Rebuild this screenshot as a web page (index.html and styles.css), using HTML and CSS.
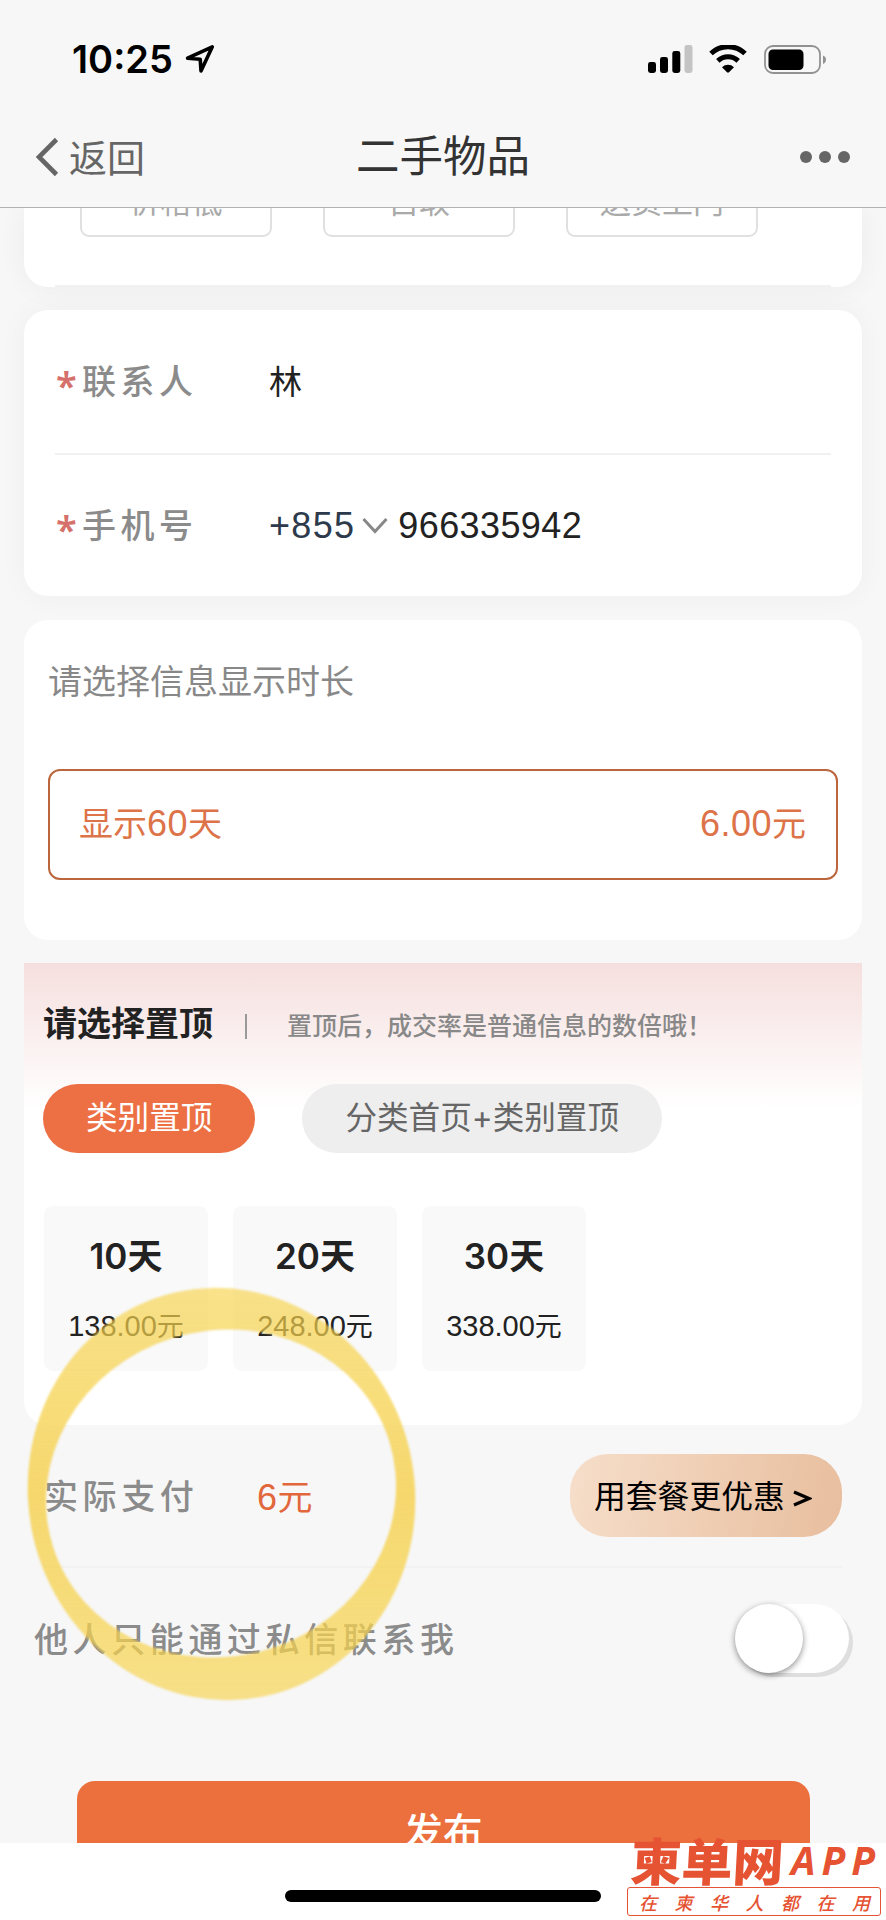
FILE: index.html
```html
<!DOCTYPE html>
<html lang="zh-CN">
<head>
<meta charset="utf-8">
<title>二手物品</title>
<link rel="stylesheet" href="styles.css">
</head>
<body>
<div class="phone">
  <header class="header">
    <div class="status">
      <div class="status-left">
        <span class="time">10:25</span>
        <svg class="loc" viewBox="0 0 30 30" width="30" height="30"><path d="M27.3 2.8 2.6 14.2l12.6 1 .8 11.8z" fill="none" stroke="#000" stroke-width="3.6" stroke-linejoin="round"/></svg>
      </div>
      <div class="status-right">
        <svg width="45" height="28" viewBox="0 0 45 28"><rect x="0" y="17" width="8" height="11" rx="2.4"/><rect x="12" y="12" width="8" height="16" rx="2.4"/><rect x="24.300" y="6" width="8" height="22" rx="2.400"/><rect x="36.500" y="0" width="8" height="28" rx="2.400" fill="#c4c4c4"/></svg>
        <svg class="wifi" width="38" height="28" viewBox="0 0 38 28"><path d="M2 8.500A24.500 24.500 0 0 1 36 8.500" fill="none" stroke="#000" stroke-width="5"/><path d="M8.800 15.800A15 15 0 0 1 29.200 15.800" fill="none" stroke="#000" stroke-width="5"/><path d="M13 22.200a8.700 8.700 0 0 1 12 0L20 27.300q-1 .9-2 0z"/></svg>
        <svg class="battery" width="62" height="29" viewBox="0 0 62 29"><rect x="1" y="1" width="55" height="27" rx="8" fill="none" stroke="#929292" stroke-width="1.800"/><rect x="4.500" y="4.500" width="35" height="20.500" rx="4.500"/><path d="M59 10.500q3 1 3 4t-3 4.500z" fill="#929292"/></svg>
      </div>
    </div>
    <nav class="nav">
      <div class="back"><svg width="23" height="40" viewBox="0 0 23 40"><path d="M20.500 2.500 3 20l17.500 17.500" fill="none" stroke="#666" stroke-width="4.600"/></svg><span>返回</span></div>
      <h1 class="title">二手物品</h1>
      <div class="more"><i></i><i></i><i></i></div>
    </nav>
  </header>

  <main class="content">
    <section class="card tags-card">
      <div class="tags"><span>价格低</span><span>自取</span><span>送货上门</span></div>
      <i class="rule"></i>
    </section>

    <section class="card contact">
      <div class="field"><b class="star">*</b><label>联系人</label><span class="value">林</span></div>
      <div class="field"><b class="star">*</b><label>手机号</label><span class="num code">+855</span><svg class="chev" width="26" height="18" viewBox="0 0 26 18"><path d="M1.500 2 13 14.500 24.500 2" fill="none" stroke="#888" stroke-width="3"/></svg><span class="num phone-no">966335942</span></div>
    </section>

    <section class="card duration">
      <h2>请选择信息显示时长</h2>
      <div class="option"><span>显示<em class="num">60</em>天</span><span><em class="num">6.00</em>元</span></div>
    </section>

    <section class="card top-card">
      <div class="top-head"><h2>请选择置顶</h2><i class="bar"></i><p>置顶后，成交率是普通信息的数倍哦！</p></div>
      <div class="pills"><span class="pill on">类别置顶</span><span class="pill">分类首页+类别置顶</span></div>
      <div class="days">
        <div class="day"><strong>10天</strong><span><em class="num">138.00</em>元</span></div>
        <div class="day"><strong>20天</strong><span><em class="num">248.00</em>元</span></div>
        <div class="day"><strong>30天</strong><span><em class="num">338.00</em>元</span></div>
      </div>
    </section>

    <div class="pay"><span class="pay-label">实际支付</span><span class="pay-sum"><em class="num">6</em>元</span><a class="package"><span>用套餐更优惠</span><svg width="19" height="17" viewBox="0 0 19 17"><path d="M1 2 16 8.500 1 15" fill="none" stroke="#000" stroke-width="3.300"/></svg></a></div>
    <div class="private"><span>他人只能通过私信联系我</span><div class="switch"><i></i></div></div>
    <button class="publish">发布</button>
  </main>

  <footer class="footer"><div class="home"></div></footer>

  <svg class="ring" width="420" height="440" viewBox="10 1274 420 440">
    <defs>
      <linearGradient id="ink" x1="0" y1="1288" x2="0" y2="1700" gradientUnits="userSpaceOnUse">
        <stop offset="0" stop-color="#f7d34c" stop-opacity=".65"/>
        <stop offset=".5" stop-color="#f5d256" stop-opacity=".86"/>
        <stop offset="1" stop-color="#f7d34c" stop-opacity=".65"/>
      </linearGradient>
      <mask id="hole" maskUnits="userSpaceOnUse" x="10" y="1274" width="420" height="440">
        <rect x="10" y="1274" width="420" height="440" fill="#fff"/>
        <ellipse cx="221" cy="1493.500" rx="176.200" ry="162.800" transform="rotate(-17.500 221 1493.500)" fill="#000"/>
      </mask>
      <clipPath id="outer"><ellipse cx="221.500" cy="1494" rx="206.800" ry="193.100" transform="rotate(77 221.500 1494)"/></clipPath>
    </defs>
    <g class="ring-ink"><g mask="url(#hole)"><path d="M10 1274h420v440H10z" fill="url(#ink)" clip-path="url(#outer)"/></g></g>
  </svg>

  <div class="brand">
    <div class="brand-row"><span class="brand-cn">柬单网</span><span class="brand-app">APP</span></div>
    <div class="slogan">在柬华人都在用</div>
  </div>
</div>
</body>
</html>
```
FILE: styles.css
```css
* { box-sizing: border-box; }
body { margin: 0; }
h1, h2, p { margin: 0; font-weight: 400; }
i { display: block; }
em { font-style: normal; }
svg { display: block; flex: none; }

.phone {
  position: relative;
  display: flex;
  flex-direction: column;
  width: 886px;
  height: 1920px;
  overflow: hidden;
  background: #f7f7f7;
  font-family: Inter, "Noto Sans CJK SC", sans-serif;
  color: #222;
  white-space: nowrap;
}
.num { font-family: "Liberation Sans", sans-serif; font-size: 36px; line-height: 1; letter-spacing: .5px; }

/* header */
.header { flex: none; height: 208px; border-bottom: 1px solid #b0b3b2; }
.status { display: flex; justify-content: space-between; height: 118px; padding: 0 60px 0 72px; align-items: center; }
.status-left, .status-right { display: flex; align-items: center; }
.time { font-size: 38px; font-weight: 600; line-height: 44px; color: #000; }
.loc { margin-left: 12px; }
.wifi { margin-left: 16px; }
.battery { margin-left: 17px; }
.nav { display: grid; grid-template-columns: 1fr auto 1fr; align-items: center; height: 78px; padding: 0 36px; }
.back { display: flex; align-items: center; gap: 10px; font-size: 38px; line-height: 50px; color: #666; }
.back span { padding-top: 2px; }
.title { font-size: 43.500px; line-height: 60px; padding-bottom: 2px; color: #333; }
.more { display: flex; gap: 7px; justify-content: flex-end; }
.more i { width: 12px; height: 12px; border-radius: 50%; background: #666; }

/* scrolling content */
.content { flex: none; height: 1635px; overflow: hidden; padding: 0 24px; }
.card { background: #fff; border-radius: 24px; margin-bottom: 23px; }
.tags-card { display: flex; flex-direction: column; justify-content: space-between; height: 79px; border-radius: 0 0 24px 24px; box-shadow: 0 0 30px rgba(60, 30, 40, .05); }
.tags { display: flex; gap: 51px; height: 29px; padding-left: 56px; align-items: flex-end; }
.tags span { width: 192px; height: 78px; flex: none; border: 2px solid #e0e0e0; border-radius: 9px; text-align: center; font-size: 31px; line-height: 82px; color: #aaa; }
.rule { height: 2px; margin: 0 31px; background: #f2f1f1; }

.contact { height: 286px; padding: 0 31px; box-shadow: 0 0 30px rgba(0, 0, 0, .04); margin-bottom: 24px; }
.field { display: flex; align-items: center; height: 143px; }
.field + .field { border-top: 2px solid #f1f1f1; }
.star { width: 27px; padding-left: 1px; font-family: "Noto Sans", sans-serif; font-size: 38px; font-weight: 600; line-height: 50px; height: 44px; color: #d6706a; }
.field label { width: 187px; font-size: 34px; font-weight: 500; line-height: 50px; letter-spacing: 4.500px; color: #8b8b8b; }
.value { font-size: 33px; line-height: 50px; }
.code { letter-spacing: 1.300px; color: #2c3a4c; }
.chev { margin: 0 10px 0 7px; }
.phone-no { letter-spacing: .4px; }

.duration { height: 320px; padding: 34px 24px 0 24px; }
.duration h2 { font-size: 34px; line-height: 56px; color: #888; }
.option { display: flex; justify-content: space-between; align-items: center; height: 111px; margin-top: 59px; padding: 0 30px 6px 29px; border: 2px solid #bc663d; border-radius: 12px; font-size: 34px; color: #dd7349; }

.top-card { height: 462px; margin-bottom: 0; padding: 32px 20px 0 19px; border-radius: 0 0 24px 24px; background: linear-gradient(#f5dfde, #fff 145px); }
.top-head { display: flex; align-items: center; height: 56px; }
.top-head h2 { font-size: 34px; font-weight: 600; line-height: 50px; padding-top: 1px; }
.bar { width: 2px; height: 25px; margin: 6px 40px 0 32px; background: #999; }
.top-head p { font-size: 25px; font-weight: 500; line-height: 40px; padding-top: 6px; color: #888; }
.pills { display: flex; gap: 47px; margin-top: 33px; }
.pill { height: 69px; padding: 0 43px; border-radius: 35px; background: #eee; color: #666; font-size: 31.600px; line-height: 68px; }
.pill.on { background: #ec7044; color: #fff; }
.days { display: flex; gap: 25px; margin: 53px 0 0 1px; }
.day { display: flex; flex-direction: column; align-items: center; width: 164px; height: 165px; padding-top: 25px; border-radius: 9px; background: #f9f9f9; }
.day strong { font-size: 35px; font-weight: 600; line-height: 50px; }
.day span { margin-top: 26px; font-size: 27px; line-height: 40px; }
.day .num { font-size: 29px; letter-spacing: 0; }

.pay { display: flex; align-items: center; height: 143px; margin: 0 20px; padding-left: 0; border-bottom: 2px solid #f2f2f2; font-size: 34px; }
.pay-label { width: 213px; font-weight: 500; letter-spacing: 4.600px; color: #8b8b8b; padding-bottom: 2px; }
.pay-sum { color: #e2673c; font-size: 35px; padding-bottom: 2px; }
.package { display: flex; align-items: center; gap: 8px; width: 272px; height: 83px; margin-left: auto; padding-left: 24px; border-radius: 38px; background: linear-gradient(100deg, #f6deca, #e8be9e); color: #000; font-size: 31.800px; }
.package span { padding-bottom: 3px; }
.package svg { margin-top: 5px; }
.private { display: flex; align-items: center; justify-content: space-between; height: 140px; padding: 0 13px 0 10px; font-size: 34px; font-weight: 500; letter-spacing: 4.600px; color: #8b8b8b; }
.private span { padding-bottom: 2px; }
.switch { width: 114px; height: 69px; border-radius: 35px; background: #fff; box-shadow: 4px 4px 0 #dedede; }
.switch i { width: 68px; height: 69px; border-radius: 50%; background: #fff; box-shadow: 0 2px 6px rgba(0, 0, 0, .45); }
.publish { display: block; width: 733px; height: 110px; margin: 73px auto 0; padding: 0 0 12px; border: 0; border-radius: 18px; background: #ec703d; color: #fff; font: 500 39.500px/92px "Noto Sans CJK SC", sans-serif; }

.footer { flex: none; display: flex; justify-content: center; height: 77px; padding-top: 47px; background: #fff; }
.home { width: 316px; height: 12px; border-radius: 6px; background: #000; }

/* hand-drawn highlight over the page */
.ring { position: absolute; left: 10px; top: 1274px; }
.ring-ink { filter: blur(1px); }

/* corner brand mark */
.brand { position: absolute; left: 627px; top: 1831px; width: 254px; color: #e55333; }
.brand-row { display: flex; align-items: center; height: 56px; }
.brand-cn { width: 165px; padding-left: 4px; font-family: "Noto Sans CJK SC", sans-serif; font-size: 51px; font-weight: 900; line-height: 56px; transform: skewX(-3deg); }
.brand-app { font: italic 700 39px/50px "Open Sans", sans-serif; letter-spacing: 6px; padding: 1px 0 0 1px; }
.slogan { height: 29px; padding-left: 11px; border: 1.500px solid #e55333; border-radius: 3px; background: #fff; font: italic 500 18px/28px "Noto Sans CJK SC", sans-serif; letter-spacing: 17.500px; overflow: hidden; }
```
